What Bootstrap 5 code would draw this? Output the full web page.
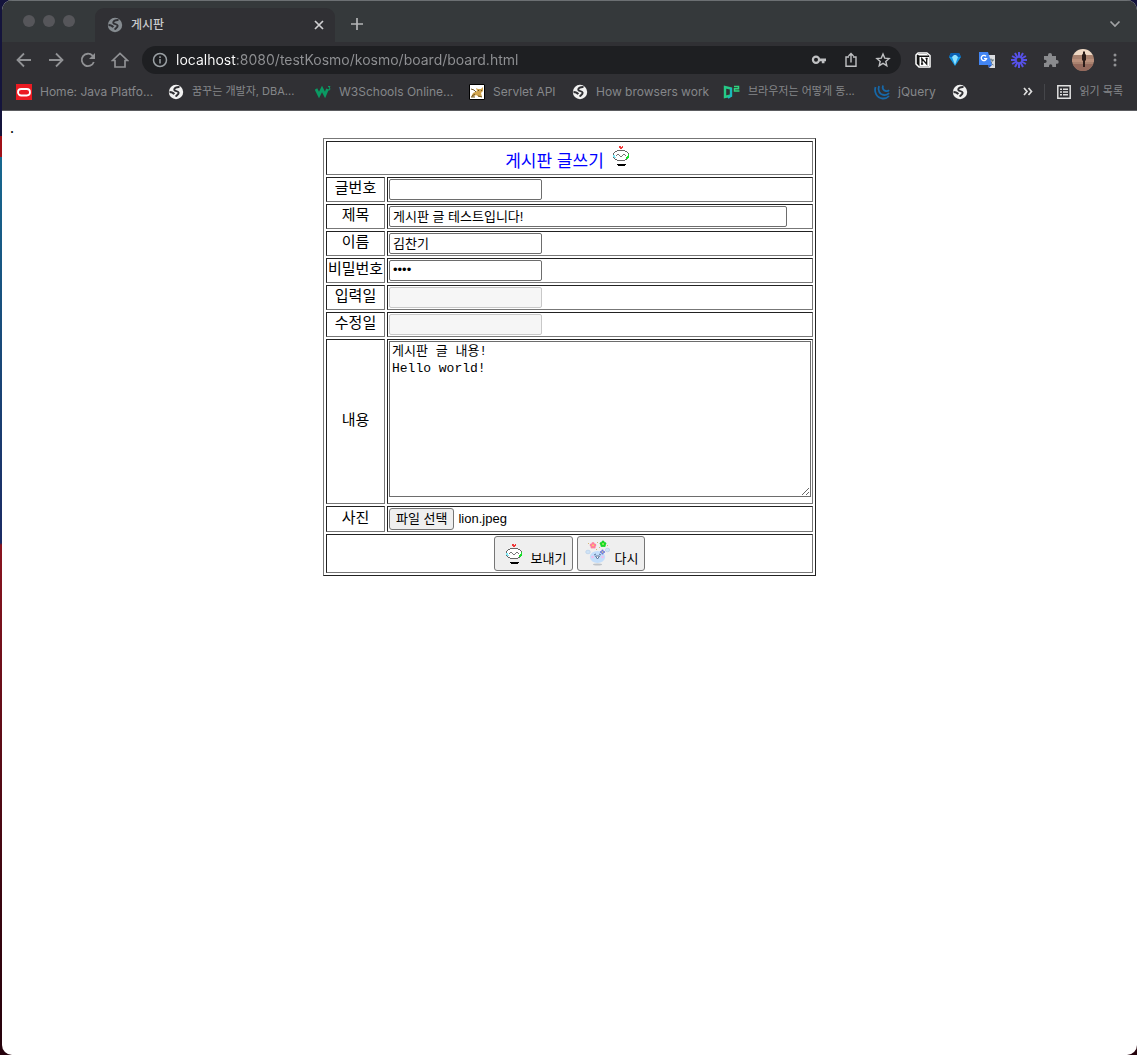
<!DOCTYPE html>
<html lang="ko">
<head>
<meta charset="utf-8">
<meta name="viewport" content="width=device-width, initial-scale=1">
<title>게시판</title>
<link href="https://cdn.jsdelivr.net/npm/bootstrap@5.3.0/dist/css/bootstrap.min.css" rel="stylesheet">
<style>
  :root { --ui: Inter, "Noto Sans CJK KR", sans-serif; --doc: "Liberation Sans", "Noto Sans CJK KR", sans-serif; }
  body { font-family: var(--ui); padding-left: 2px;
    background: linear-gradient(#14143c 0 136px, #a01018 136px 157px, #17688f 157px, #1b2a63 543px, #8a1420 545px, #3a0510 900px, #25020c) #25020c; }
  .browser { border-radius: 10px; overflow: hidden; background: #fff; }
  .tabstrip { height: 42px; background: #35393b; border-top: 1px solid #6c7073; padding: 7px 14px 0 21px; }
  .dot { width: 12px; height: 12px; border-radius: 50%; background: #56565a; }
  .lights { gap: 8px; height: 26px; width: 72px; }
  .tab { width: 240px; height: 34px; background: #303034; border-radius: 9px 9px 0 0; padding: 0 9px 0 12px; color: #c9cacc; font-size: 12px; font-weight: 500; }
  .ibtn { border: 0; background: none; padding: 0; width: 32px; height: 28px; display: inline-flex; align-items: center; justify-content: center; color: #909194; flex: none; }
  .tab .ibtn { width: 14px; color: #d0d0d2; }
  .newtab { margin: 2px 0 0 6px; }
  .tools { height: 36px; background: #303034; padding: 0 6px; }
  .omni { height: 28px; border-radius: 14px; background: #1e1f22; margin: 0 6px; padding: 0 2px; }
  .omni .ibtn { color: #c0c1c3; }
  .omni input { border: 0; outline: 0; padding: 0 0 2px; min-width: 0; font-size: 14px; height: 28px; color: transparent;
    background: linear-gradient(90deg, #fff 61px, #909194 61px); -webkit-background-clip: text; background-clip: text; }
  .marks { height: 33px; background: #303034; border-bottom: 1px solid #5b5c60; padding: 0 14px 5px; font-size: 12px; color: #85878a; }
  .marks a { color: inherit; text-decoration: none; display: flex; align-items: center; gap: 8px; white-space: nowrap; }
  .marks .ko { font-size: 11px; }
  .marks svg { flex: none; }
  .marks .vr { height: 16px; align-self: center; background: #85878a; }
  .marklist { display: grid; grid-template-columns: 152px 147px 154px 103px 151px 151px 78px 16px; }
  .sheet { min-height: calc(100vh - 111px); padding: 8px; font-family: var(--doc); color: #000; }
  .sheet p { line-height: 18px; height: 19px; font-family: "Liberation Serif", serif; }
  .board { width: 493px; max-width: 100%; table-layout: fixed; border-collapse: separate; border-spacing: 2px; border: 1px solid; border-color: #777 #222 #222 #777; font-size: 15px; line-height: 20px; }
  .board th, .board td { border: 1px solid; border-color: #222 #777 #777 #222; padding: 1px; height: 25px; }
  .board th { font-weight: 400; text-align: center; white-space: nowrap; padding: 0 0 3px; }
  .board td { vertical-align: top; }
  .board .lab { width: 59px; }
  .board .head { height: 34px; color: #00f; vertical-align: top; }
  .head h1 { font-size: 17px; line-height: 16px; font-weight: 400; }
  .board .tall { height: 165px; }
  .board .pic { height: 26px; }
  .board .foot { height: 39px; }
  .field { display: block; width: 153px; height: 21px; border: 1px solid #6d6d6d; border-radius: 2px; padding: 0 3px 2px; font-size: 13px; line-height: 17px; background: #fff; color: #000; }
  .field.wide { width: 398px; max-width: 100%; }
  .field:disabled { background: #f6f6f6; border-color: #c8c8c8; }
  .body-text { display: block; width: 100%; height: 156px; border: 1px solid #6d6d6d; padding: 1px 2px; font: 13px/17px "Liberation Mono", "Noto Sans CJK KR", monospace; color: #000; }
  .push { border: 1px solid #767676; border-radius: 3px; background: #efefef; color: #000; font-size: 13px; line-height: 18px; padding: 1px 6px; }
  .pick { height: 22px; }
  .fname { font-size: 13px; line-height: 22px; }
  .send { height: 35px; padding: 1px 6px 2px; }
</style>
<script src="https://cdn.jsdelivr.net/npm/bootstrap@5.3.0/dist/js/bootstrap.bundle.min.js"></script>
</head>
<body>
<svg class="d-none" aria-hidden="true">
  <symbol id="globe" viewBox="0 0 16 16"><circle cx="8" cy="8" r="7.2" fill="currentColor"/><path d="M11.500 3C8.500 2.800 6.200 4 6.300 5.800C6.500 7.600 10.300 6.600 10.600 8.600C10.800 10.600 8.600 10.800 7.800 12.600M1.500 8C3.500 8 5.200 8.400 6.200 10.200" fill="none" stroke="#303034" stroke-width="2"/></symbol>
  <symbol id="robot" viewBox="0 0 26 28"><g shape-rendering="crispEdges">
    <path d="M11 4h2v1h1v-1h1v2h-1v1h-2v-1h-1z" fill="#f03a3a"/>
    <path d="M9 9h8v1h2v1h1v5h-1v1h-2v1h-8v-1h-2v-1h-1v-5h1v-1h2z" fill="#fff"/>
    <path d="M9 8h8v1h-8zM7 9h2v1h-2zM17 9h2v1h-2zM6 10h1v1h-1zM19 10h1v1h-1zM5 11h1v5h-1zM20 11h1v5h-1zM6 16h1v1h-1zM19 16h1v1h-1zM7 17h2v1h-2zM17 17h2v1h-2zM9 18h8v1h-8z" fill="#666"/>
    <path d="M8 13h1v1h-1zM9 12h2v1h-2zM11 13h1v1h-1zM12 14h2v1h-2zM14 13h1v1h-1zM15 12h2v1h-2zM17 13h1v1h-1z" fill="#777"/>
    <path d="M5 13h2v2h1v1h-2v-1h-1z" fill="#7fe8f5"/><path d="M20 12h1v4h-1v1h-2v-2h1v-1h1z" fill="#19dc2b"/>
    <path d="M9 22h9v1h-1v1h-7v-1h-1z" fill="#000"/></g></symbol>
  <symbol id="party" viewBox="0 0 26 28">
    <ellipse cx="13.500" cy="24.500" rx="4.500" ry="1" fill="#bfc3c8"/>
    <ellipse cx="13.500" cy="17" rx="7.700" ry="6" fill="#c3defb"/><ellipse cx="4" cy="12" rx="2.300" ry="1.800" fill="#cfe3f6" stroke="#a9c5e4" stroke-width=".5"/><ellipse cx="23.500" cy="10" rx="2.200" ry="1.800" fill="#cfe3f6" stroke="#a9c5e4" stroke-width=".5"/>
    <circle cx="8.500" cy="17" r="1.300" fill="#f1bdea"/><circle cx="18.500" cy="17" r="1.300" fill="#f1bdea"/>
    <path d="M10 15l2-1M15 14l2 1M11.500 16h4l-2 3z" stroke="#506b91" fill="#fff" stroke-width=".9"/>
    <g fill="#ff7f9d"><circle cx="9" cy="3.400" r="1.500"/><circle cx="7.200" cy="5" r="1.500"/><circle cx="10.800" cy="5" r="1.500"/><circle cx="8" cy="7" r="1.500"/><circle cx="10.200" cy="7" r="1.500"/></g><circle cx="9" cy="5.400" r=".8" fill="#ffd84a"/>
    <g fill="#18d926"><circle cx="19" cy="2" r="1.500"/><circle cx="17.200" cy="3.600" r="1.500"/><circle cx="20.800" cy="3.600" r="1.500"/><circle cx="18" cy="5.500" r="1.500"/><circle cx="20.200" cy="5.500" r="1.500"/></g><circle cx="19" cy="4" r=".7" fill="#ff6"/>
    <g fill="#6b78d8"><circle cx="18.500" cy="10.700" r="1.100"/><circle cx="17" cy="12" r="1.100"/><circle cx="20" cy="12" r="1.100"/><circle cx="18.500" cy="13.400" r="1.100"/></g><circle cx="18.500" cy="12" r=".6" fill="#ffd24d"/>
    <path d="M4 3.500h1M13 2.500h1M15 7.500h1M23 5.500h1M12 9.500h1" stroke="#d6b878"/></symbol>
</svg>
<div class="browser">
  <header>
    <div class="tabstrip d-flex align-items-start">
      <div class="lights d-flex align-items-center"><span class="dot"></span><span class="dot"></span><span class="dot"></span></div>
      <div class="tab d-flex align-items-center">
        <svg width="16" height="16" class="me-2" color="#858b90"><use href="#globe"/></svg><span class="flex-grow-1">게시판</span>
        <button class="ibtn" aria-label="탭 닫기"><svg width="10" height="10" viewBox="0 0 10 10" stroke="currentColor" stroke-width="1.700"><path d="M1 1l8 8M9 1l-8 8"/></svg></button>
      </div>
      <button class="ibtn newtab" aria-label="새 탭"><svg width="14" height="14" viewBox="0 0 14 14" stroke="#b4b5b7" stroke-width="1.700"><path d="M7 1v12M1 7h12"/></svg></button>
      <button class="ibtn ms-auto newtab w-auto" aria-label="탭 검색"><svg width="16" height="12" viewBox="0 0 16 12" fill="none" stroke="#a2a3a5" stroke-width="1.700"><path d="M3.500 3.500L8 8l4.500-4.500"/></svg></button>
    </div>
    <div class="tools d-flex align-items-center">
      <button class="ibtn" aria-label="뒤로"><svg width="16" height="16" viewBox="0 0 16 16" fill="none" stroke="currentColor" stroke-width="1.800"><path d="M15 8H2M8 1.500L1.500 8L8 14.500"/></svg></button>
      <button class="ibtn" aria-label="앞으로"><svg width="16" height="16" viewBox="0 0 16 16" fill="none" stroke="currentColor" stroke-width="1.800"><path d="M1 8h13M8 1.500L14.500 8L8 14.500"/></svg></button>
      <button class="ibtn" aria-label="새로고침"><svg width="16" height="16" viewBox="0 0 16 16" fill="none" stroke="currentColor" stroke-width="1.800"><path d="M13.800 10A6.200 6.200 0 1 1 12.500 3.700L14 5.500"/><path d="M15 1v6H9z" fill="currentColor" stroke="none"/></svg></button>
      <button class="ibtn" aria-label="홈"><svg width="18" height="16" viewBox="0 0 18 16" fill="none" stroke="currentColor" stroke-width="1.700"><path d="M1.500 8.500L9 1.500L16.500 8.500H14V15H4V8.500z"/></svg></button>
      <div class="omni d-flex flex-grow-1">
        <button class="ibtn" aria-label="사이트 정보"><svg width="16" height="16" viewBox="0 0 16 16" fill="none" stroke="#9aa0a4" stroke-width="1.500"><circle cx="8" cy="8" r="6.500"/><path d="M8 7v4.500M8 4.200v1.700"/></svg></button>
        <input class="flex-grow-1" aria-label="주소" value="localhost:8080/testKosmo/kosmo/board/board.html">
        <button class="ibtn" aria-label="비밀번호"><svg width="16" height="12" viewBox="0 0 16 12"><path d="M9 4.500h6v2.800h-1.500v2h-2.700v-2H9" fill="currentColor"/><circle cx="5" cy="5.800" r="3.100" fill="none" stroke="currentColor" stroke-width="2.200"/></svg></button>
        <button class="ibtn" aria-label="공유"><svg width="14" height="16" viewBox="0 0 14 16" fill="none" stroke="currentColor" stroke-width="1.400"><path d="M5 5H2v9.300h10V5H9M7 10.500V2M4.500 4L7 1.500L9.500 4"/></svg></button>
        <button class="ibtn" aria-label="북마크"><svg width="16" height="16" viewBox="0 0 16 16" fill="none" stroke="currentColor" stroke-width="1.400"><path d="M8 2l1.700 4.100 4.400.4-3.300 2.900 1 4.300L8 11.400l-3.800 2.300 1-4.300L1.900 6.500l4.400-.4z"/></svg></button>
      </div>
      <button class="ibtn" aria-label="Notion"><svg width="16" height="16" viewBox="0 0 16 16"><path d="M1 3L3 1H12L15 3.500V15H4L1 12z" fill="#111" stroke="#fff" stroke-width="1.500" stroke-linejoin="round"/><path d="M2 2h10l1.500 1.500H4z" fill="#fff"/><path d="M4.500 5h9.500v9H4.500z" fill="#fff"/><path d="M7 12V6.800L11.700 12V6.500M6 6.800h1.500M6 12h2.200M10.500 6.500h2.200" stroke="#111" stroke-width="1.300" fill="none"/></svg></button>
      <button class="ibtn" aria-label="다이아몬드"><svg width="14" height="16" viewBox="0 0 14 16"><path d="M3 1h8l2 4-6 9L1 5z" fill="#1597e5"/><path d="M3 1h8l2 4H1z" fill="#0a5fb2"/><path d="M4 5l2-2h2l2 2-3 8z" fill="#8fe1ff"/></svg></button>
      <button class="ibtn" aria-label="번역"><svg width="18" height="18" viewBox="0 0 18 18"><path d="M8 4h9v13h-6z" fill="#dadce0"/><path d="M10 9h6M13 7.500V9M11 14c2-1 3-3 3.500-5M11.500 10c1 2 2 3 4 4" stroke="#5f7074" fill="none"/><path d="M1 1h9l4 13H1z" fill="#4285f4"/><path d="M8 5.200A2.700 2.700 0 1 0 8.600 7.700H6" fill="none" stroke="#fff" stroke-width="1.300"/><path d="M10 14h4l-3 3z" fill="#2459c4"/></svg></button>
      <button class="ibtn" aria-label="Loom"><svg width="18" height="18" viewBox="-9 -9 18 18" stroke="#5751e8" stroke-width="2"><g id="sp"><path d="M0-3V-8M0 3V8M-3 0H-8M3 0H8"/></g><use href="#sp" transform="rotate(30)"/><use href="#sp" transform="rotate(60)"/><circle r="3" fill="none" stroke-width="1.500"/></svg></button>
      <button class="ibtn" aria-label="확장 프로그램"><svg width="16" height="16" viewBox="0 0 16 16"><path d="M1 4h4V3a2 2 0 0 1 4 0v1h4v4h.8a1.800 1.800 0 0 1 0 3.800H13V15H9.300v-1a1.600 1.600 0 0 0-3.300 0v1H1v-4h1a1.600 1.600 0 0 0 0-3.300H1z" fill="#8a8b8e"/></svg></button>
      <button class="ibtn" aria-label="프로필"><svg width="22" height="22" viewBox="0 0 22 22"><defs><clipPath id="face"><circle cx="11" cy="11" r="11"/></clipPath></defs><g clip-path="url(#face)"><path d="M0 0h22v7H0z" fill="#efd8c4"/><path d="M0 6h22v16H0z" fill="#a9826f"/><path d="M0 10h22v3H0z" fill="#b98f7b"/><path d="M0 15h22v7H0z" fill="#94695c"/><path d="M11 2.500h2v2l1 1.500v5l-1 1v6h-2v-6l-1-1V6l1-1.500z" fill="#2a1b18"/></g></svg></button>
      <button class="ibtn" aria-label="메뉴"><svg width="4" height="16" viewBox="0 0 4 16" fill="currentColor"><circle cx="2" cy="3" r="1.500"/><circle cx="2" cy="8" r="1.500"/><circle cx="2" cy="13" r="1.500"/></svg></button>
    </div>
    <nav class="marks d-flex align-items-center" aria-label="북마크">
      <div class="marklist">
        <a href="#"><svg width="16" height="16" viewBox="0 0 16 16"><path d="M0 0h16v16H0z" fill="#ea1b22"/><rect x="2" y="5" width="12" height="6.500" rx="3.200" fill="none" stroke="#fff" stroke-width="1.800"/></svg>Home: Java Platfo...</a>
        <a href="#" class="ko"><svg width="16" height="16" color="#f1f1f1"><use href="#globe"/></svg>꿈꾸는 개발자, DBA...</a>
        <a href="#"><svg width="16" height="16" viewBox="0 0 16 16" fill="none" stroke="#0b9a63"><path d="M1 5l3 6 3-6 3 6 2.500-6" stroke-width="2.800"/><path d="M13 2.500h2l-1 1.500 1 .5-.5 1.500h-1.500"/></svg>W3Schools Online...</a>
        <a href="#"><svg width="16" height="16" viewBox="0 0 16 16"><path d="M.5.500h15v15H.5z" fill="#fff" stroke="#000"/><path d="M7 4l2 1h3l2-2v4l-2 2 1 4h-3l-3-2-3 2H2l2-4 4-2z" fill="#d0a34c"/><path d="M2 5l3 1 2 2M3 12l3-2M9 6l1 1M12 6l1 1M2 13h4M9 12l4 1" stroke="#6b5525" fill="none"/></svg>Servlet API</a>
        <a href="#"><svg width="16" height="16" color="#f1f1f1"><use href="#globe"/></svg>How browsers work</a>
        <a href="#" class="ko"><svg width="17" height="16" viewBox="0 0 17 16" fill="none"><path d="M2 3v10l6-1.500V4.500z" stroke="#25ca86" stroke-width="2.400"/><path d="M8 4v8l-3 2" stroke="#1bb8bd" stroke-width="2"/><path d="M11 2.500h4.500v2.200h-4V7h5" stroke="#2ed37e" stroke-width="1.500"/></svg>브라우저는 어떻게 동...</a>
        <a href="#"><svg width="16" height="16" viewBox="0 0 16 16" fill="none" stroke="#1768a8" stroke-width="1.800"><path d="M1.500 3c-1.500 5 1 11 7 11.500 3 .2 5-.8 6.500-2.500"/><path d="M5 2c-1.500 4 .5 8.500 5 9 2 .2 4-.5 5-2"/><path d="M9 1.500c-1 3 .5 5 3 5.500 1.200.2 2.500-.2 3-1"/></svg>jQuery</a>
        <a href="#" aria-label="북마크"><svg width="16" height="16" color="#f1f1f1"><use href="#globe"/></svg></a>
      </div>
      <button class="ibtn ms-auto" aria-label="더보기"><svg width="10" height="9" viewBox="0 0 10 9" fill="none" stroke="#ddd" stroke-width="1.700"><path d="M1 1l3 3.500L1 8M5.500 1l3 3.500-3 3.500"/></svg></button>
      <span class="vr"></span>
      <a href="#" class="ko ms-2 ps-1"><svg width="14" height="14" viewBox="0 0 14 14" fill="none" stroke="#e0e0e0" stroke-width="1.500"><path d="M.8.800h12.400v12.400H.8z"/><path d="M3 4.200h2M6 4.200h5M3 7h2M6 7h5M3 9.800h2M6 9.800h5"/></svg>읽기 목록</a>
    </nav>
  </header>
  <main class="sheet">
    <p class="m-0">.</p>
    <form onsubmit="return false">
      <table class="board mx-auto">
        <colgroup><col class="lab"><col></colgroup>
        <tr><th colspan="2" class="head"><div class="d-flex justify-content-center align-items-end gap-1"><h1 class="m-0">게시판 글쓰기</h1><svg width="26" height="28"><use href="#robot"/></svg></div></th></tr>
        <tr><th><label for="no">글번호</label></th><td><input class="field" id="no"></td></tr>
        <tr><th><label for="subject">제목</label></th><td><input class="field wide" id="subject" value="게시판 글 테스트입니다!"></td></tr>
        <tr><th><label for="writer">이름</label></th><td><input class="field" id="writer" value="김찬기"></td></tr>
        <tr><th><label for="pw">비밀번호</label></th><td><input class="field" id="pw" type="password" value="1234"></td></tr>
        <tr><th><label for="made">입력일</label></th><td><input class="field" id="made" disabled></td></tr>
        <tr><th><label for="edited">수정일</label></th><td><input class="field" id="edited" disabled></td></tr>
        <tr><th class="tall"><label for="content">내용</label></th><td><textarea class="body-text" id="content">게시판 글 내용!
Hello world!</textarea></td></tr>
        <tr><th class="pic">사진</th><td><div class="d-flex gap-1"><input type="file" id="photo" class="visually-hidden"><label for="photo" class="push pick">파일 선택</label><span class="fname">lion.jpeg</span></div></td></tr>
        <tr><td colspan="2" class="foot"><div class="d-flex justify-content-center gap-1">
          <button type="submit" class="push send d-flex align-items-end gap-1"><svg width="26" height="28"><use href="#robot"/></svg>보내기</button>
          <button type="reset" class="push send d-flex align-items-end gap-1"><svg width="26" height="28"><use href="#party"/></svg>다시</button></div></td></tr>
      </table>
    </form>
  </main>
</div>
</body>
</html>
